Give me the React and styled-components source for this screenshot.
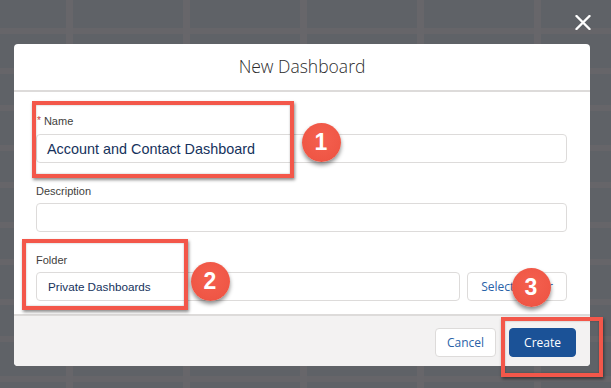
import React from "react";
import styled, { createGlobalStyle } from "styled-components";

const Global = createGlobalStyle`
  html, body { margin: 0; padding: 0; }
  body {
    width: 611px;
    height: 388px;
    overflow: hidden;
    background-color: #5f6267;
    background-image:
      linear-gradient(90deg, transparent 66px, #67666a 66px, #67666a 73px, transparent 73px),
      linear-gradient(180deg, transparent 28px, #666569 28px, #666569 34px, transparent 34px, transparent 68px, #666569 68px, #666569 74px, transparent 74px);
    background-size: 117px 100%, 100% 77px;
    font-family: "Liberation Sans", Arial, sans-serif;
  }
  * { box-sizing: border-box; }
`;

const Page = styled.div`
  position: relative;
  width: 611px;
  height: 388px;
  display: flex;
  flex-direction: column;
  padding: 15px 20px 0 14px;
`;

const CloseRow = styled.div`
  display: flex;
  justify-content: flex-end;
  height: 15px;
`;

const CloseButton = styled.button`
  width: 16px;
  height: 15px;
  padding: 0;
  border: 0;
  background: none;
  display: flex;
`;

const Modal = styled.div`
  margin-top: 14px;
  width: 576px;
  background: #fff;
  border-radius: 4px;
  overflow: hidden;
  display: flex;
  flex-direction: column;
`;

const Header = styled.div`
  height: 48px;
  flex: 0 0 48px;
  border-bottom: 2px solid #dddbda;
  display: flex;
  align-items: center;
  justify-content: center;
`;

const Title = styled.h2`
  margin: 0;
  font-family: "Open Sans", sans-serif;
  font-weight: 300;
  font-size: 17.5px;
  color: #2b2b2b;
  line-height: 1;
`;

const Body = styled.div`
  padding: 22px 23px 13px 22px;
  display: flex;
  flex-direction: column;
  gap: 21px;
`;

const Field = styled.div`
  display: flex;
  flex-direction: column;
`;

const Label = styled.div`
  font-size: 11px;
  line-height: 14px;
  color: #3e3e3c;
  margin-bottom: 5px;
  display: flex;
  align-items: baseline;
`;

const Required = styled.span`
  color: #c23934;
  font-size: 10px;
  margin: 0 3px 0 1px;
  position: relative;
  top: -1px;
`;

const InputRow = styled.div`
  display: flex;
  gap: 7px;
`;

const Input = styled.div`
  flex: 1 1 auto;
  min-width: 0;
  height: 29px;
  min-height: 29px;
  border: 1px solid #dddbda;
  border-radius: 4px;
  background: #fff;
  display: flex;
  align-items: center;
  padding: 0 ${(p) => (p.$large ? "10px" : "11px")};
  color: #16325c;
  font-size: ${(p) => (p.$large ? "14.4px" : "11.7px")};
  white-space: nowrap;
`;

const Button = styled.button`
  height: 29px;
  border-radius: 4px;
  border: 1px solid ${(p) => (p.$brand ? "#1b5297" : "#dddbda")};
  background: ${(p) => (p.$brand ? "#1b5297" : "#fff")};
  color: ${(p) => (p.$brand ? "#fff" : "#2a62a8")};
  font-family: "Open Sans", sans-serif;
  font-size: 12px;
  padding: 0 ${(p) => (p.$brand ? "14px" : "11px")};
  white-space: nowrap;
  flex: ${(p) => (p.$width ? `0 0 ${p.$width}px` : "0 0 auto")};
`;

const Footer = styled.div`
  border-top: 2px solid #dddbda;
  background: #f3f2f2;
  height: 52px;
  flex: 0 0 52px;
  padding: 3px 14px 0;
  display: flex;
  justify-content: flex-end;
  align-items: center;
  gap: 13px;
`;

const Highlight = styled.div`
  position: absolute;
  border: 4px solid #f3574a;
  box-shadow: 1px 2px 3px rgba(0, 0, 0, 0.45), inset 0 0 2px rgba(0, 0, 0, 0.3);
`;

const Badge = styled.div`
  position: absolute;
  width: 39px;
  height: 39px;
  border-radius: 50%;
  background: radial-gradient(circle at 50% 40%, #f4604f 0%, #ef5645 70%, #e24d3e 100%);
  box-shadow: 0 3px 4px rgba(0, 0, 0, 0.45);
  color: #fff;
  font-family: "Liberation Sans", Arial, sans-serif;
  font-weight: 700;
  font-size: 23px;
  display: flex;
  align-items: center;
  justify-content: center;
`;

const highlights = [
  { l: 32, t: 101, w: 262, h: 77 },
  { l: 22, t: 239, w: 166, h: 71 },
  { l: 501, t: 317, w: 102, h: 60 },
];

const badges = [
  { n: 1, cx: 321, cy: 142 },
  { n: 2, cx: 210, cy: 281 },
  { n: 3, cx: 531, cy: 287 },
];

export default function App() {
  return (
    <>
      <Global />
      <Page>
        <CloseRow>
          <CloseButton aria-label="Close">
            <svg width="16" height="15" viewBox="0 0 16 15">
              <path d="M1.5 1 L14.5 14 M14.5 1 L1.5 14" stroke="#fff" strokeWidth="2.4" strokeLinecap="round" />
            </svg>
          </CloseButton>
        </CloseRow>
        <Modal>
          <Header>
            <Title>New Dashboard</Title>
          </Header>
          <Body>
            <Field>
              <Label>
                <Required>*</Required>Name
              </Label>
              <Input $large>Account and Contact Dashboard</Input>
            </Field>
            <Field>
              <Label>Description</Label>
              <Input />
            </Field>
            <Field>
              <Label>Folder</Label>
              <InputRow>
                <Input>Private Dashboards</Input>
                <Button $width={100}>Select Folder</Button>
              </InputRow>
            </Field>
          </Body>
          <Footer>
            <Button>Cancel</Button>
            <Button $brand>Create</Button>
          </Footer>
        </Modal>
        {highlights.map((h, i) => (
          <Highlight key={i} style={{ left: h.l, top: h.t, width: h.w, height: h.h }} />
        ))}
        {badges.map((b) => (
          <Badge key={b.n} style={{ left: b.cx - 19.5, top: b.cy - 19.5 }}>
            {b.n}
          </Badge>
        ))}
      </Page>
    </>
  );
}
